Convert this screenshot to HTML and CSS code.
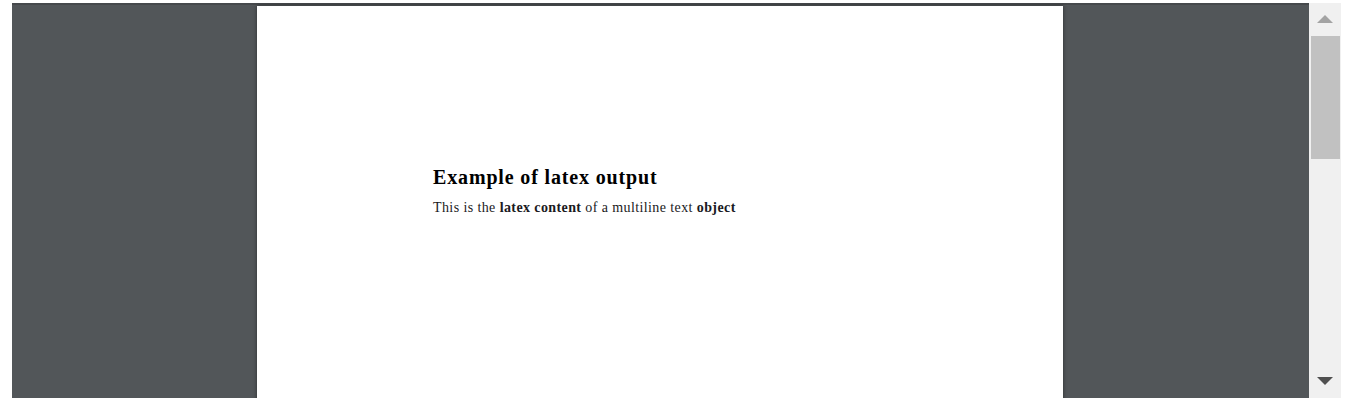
FILE: index.html
```html
<!DOCTYPE html>
<html>
<head>
<meta charset="utf-8">
<link rel="stylesheet" href="styles.css">
</head>
<body>
<div class="frame">
  <div class="viewer">
    <div class="page">
      <div class="content">
        <h1 class="title">Example of latex output</h1>
        <p class="text">This is the <b>latex content</b> of a multiline text <b>object</b></p>
      </div>
    </div>
  </div>
  <div class="scrollbar">
    <div class="arrow up"></div>
    <div class="thumb"></div>
    <div class="track"></div>
    <div class="arrow down"></div>
  </div>
</div>
</body>
</html>
```

FILE: styles.css
```css
html, body {
  margin: 0;
  padding: 0;
  background: #ffffff;
  height: 405px;
  overflow: hidden;
}
.frame {
  display: flex;
  margin: 3px 21px 0 12px;
  height: 395px;
}
.viewer {
  flex: 1;
  background: #525659;
  padding: 3px 0 0 245px;
  overflow: hidden;
  box-shadow: inset 0 3px 0 -1px #46494c;
}
.page {
  width: 806px;
  height: 600px;
  background: #ffffff;
  box-shadow: 0 0 4px rgba(0, 0, 0, 0.45);
}
.content {
  padding: 160px 0 0 176px;
  font-family: "Liberation Serif", "DejaVu Serif", serif;
  color: #1a1a22;
}
.title {
  margin: 0;
  font-size: 20px;
  font-weight: bold;
  line-height: 23px;
  letter-spacing: 0.85px;
  color: #000000;
}
.text {
  margin: 11px 0 0 0;
  font-size: 14px;
  line-height: 16px;
  letter-spacing: 0.4px;
}
.scrollbar {
  width: 32px;
  background: #f0f0f0;
  display: flex;
  flex-direction: column;
  align-items: center;
}
.arrow {
  width: 0;
  height: 0;
  border-left: 8px solid transparent;
  border-right: 8px solid transparent;
}
.arrow.up {
  margin-top: 12px;
  border-bottom: 8px solid #a3a3a3;
}
.thumb {
  margin-top: 13px;
  width: 29px;
  height: 123px;
  background: #c1c1c1;
}
.track {
  flex: 1;
}
.arrow.down {
  margin-bottom: 13px;
  border-top: 8px solid #505050;
}
```
